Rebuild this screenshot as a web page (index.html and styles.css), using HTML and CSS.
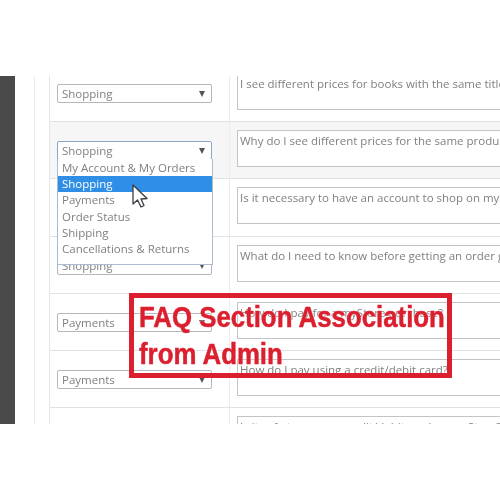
FILE: index.html
```html
<!DOCTYPE html>
<html lang="en">

<head>
    <meta charset="UTF-8">
    <title>FAQ Section Association</title>
    <link rel="stylesheet" href="styles.css">
</head>

<body>
    <div class="shot">
        <div class="sidebar"></div>
        <div class="gutter"></div>
        <div class="faq-table">
            <div class="faq-row">
                <div class="cell-select"><div class="select">Shopping<span class="arrow"></span></div></div>
                <div class="cell-text"><div class="question">I see different prices for books with the same title</div></div>
            </div>
            <div class="faq-row active">
                <div class="cell-select"><div class="select focus">Shopping<span class="arrow"></span></div></div>
                <div class="cell-text"><div class="question">Why do I see different prices for the same product?</div></div>
            </div>
            <div class="faq-row">
                <div class="cell-select"><div class="select">Shopping<span class="arrow"></span></div></div>
                <div class="cell-text"><div class="question">Is it necessary to have an account to shop on myStore?</div></div>
            </div>
            <div class="faq-row">
                <div class="cell-select"><div class="select">Shopping<span class="arrow"></span></div></div>
                <div class="cell-text"><div class="question">What do I need to know before getting an order generated?</div></div>
            </div>
            <div class="faq-row">
                <div class="cell-select"><div class="select">Payments<span class="arrow"></span></div></div>
                <div class="cell-text"><div class="question">How do I pay for a myStore purchase?</div></div>
            </div>
            <div class="faq-row">
                <div class="cell-select"><div class="select">Payments<span class="arrow"></span></div></div>
                <div class="cell-text"><div class="question">How do I pay using a credit/debit card?</div></div>
            </div>
            <div class="faq-row">
                <div class="cell-select"><div class="select">Payments<span class="arrow"></span></div></div>
                <div class="cell-text"><div class="question">Is it safe to use my credit/debit card on myStore?</div></div>
            </div>
        </div>

        <ul class="dropdown">
            <li>My Account &amp; My Orders</li>
            <li class="selected">Shopping</li>
            <li>Payments</li>
            <li>Order Status</li>
            <li>Shipping</li>
            <li>Cancellations &amp; Returns</li>
        </ul>

        <svg class="cursor" width="17" height="24" viewBox="0 0 17 24">
            <path d="M1 1 L1 20 L5.5 16 L9 23 L12 21.5 L9 15 L15 14.5 Z" fill="#fff" stroke="#3c3c44" stroke-width="1.3" stroke-linejoin="round"/>
        </svg>

        <div class="callout"><span class="callout-line">FAQ Section Association</span><span class="callout-line">from Admin</span></div>
    </div>
</body>

</html>
```

FILE: styles.css
```css
body {
    margin: 0;
    background-color: #fff;
    font-family: "Open Sans", sans-serif;
}

.shot {
    position: relative;
    display: flex;
    height: 348px;
    margin-top: 76px;
    overflow: hidden;
    background: #fff;
    filter: blur(0.35px);
}

.sidebar {
    flex: 0 0 15px;
    background: #4a4a4a;
}

.gutter {
    flex: 0 0 15px;
    margin-left: 19px;
    border-left: 1px solid #ececec;
    box-sizing: border-box;
}

.faq-table {
    flex: 1;
    min-width: 0;
    margin-top: -11px;
    border-left: 1px solid #e6e6e6;
}

.faq-row {
    display: grid;
    grid-template-columns: 180px 1fr;
    height: 56.2px;
    border-bottom: 1px solid #e2e2e2;
}

.faq-row.active {
    background: #f6f6f6;
}

.cell-select {
    display: flex;
    align-items: center;
    padding: 0 17px 0 7px;
    border-right: 1px solid #ececec;
}

.select {
    position: relative;
    flex: 1;
    height: 17px;
    padding-left: 4px;
    margin-top: 1px;
    background: #fff;
    border: 1px solid #b4b8bc;
    border-radius: 2px;
    font-size: 11.5px;
    line-height: 17px;
    color: #808080;
}

.select.focus {
    border-color: #8ea6c4;
}

.arrow {
    position: absolute;
    top: 6px;
    right: 6px;
    border-left: 3.5px solid transparent;
    border-right: 3.5px solid transparent;
    border-top: 6px solid #555;
}

.cell-text {
    padding: 8px 0 0 7px;
    overflow: hidden;
}

.question {
    height: 37px;
    width: 320px;
    padding: 1px 0 0 2px;
    box-sizing: border-box;
    background: #fff;
    border: 1px solid #c4c4c4;
    border-right: none;
    font-size: 11.5px;
    line-height: 18px;
    color: #808080;
    white-space: nowrap;
}

.dropdown {
    position: absolute;
    left: 57px;
    top: 83px;
    width: 154px;
    height: 104px;
    margin: 0;
    padding: 1px 0 0;
    list-style: none;
    background: #fff;
    border: 1px solid #a9bcd0;
    border-top: none;
    font-size: 11.5px;
    line-height: 16.2px;
    color: #808080;
}

.dropdown li {
    padding-left: 4px;
}

.dropdown .selected {
    background: #2f8fe6;
    color: #fff;
}

.cursor {
    position: absolute;
    left: 132px;
    top: 108px;
}

.callout {
    position: absolute;
    left: 129px;
    top: 217px;
    width: 308px;
    height: 75px;
    padding-left: 5px;
    border: 5px solid #dc1f2f;
    font-family: "Liberation Sans", Arial, sans-serif;
    font-weight: bold;
    font-size: 30px;
    line-height: 37px;
    color: #dc1f2f;
    -webkit-text-stroke: 0.5px #dc1f2f;
    text-shadow: 0 0 1px #fff, 0 0 2px #fff;
    white-space: nowrap;
}

.callout-line {
    display: block;
    transform: scaleX(0.86);
    transform-origin: left;
}
```
